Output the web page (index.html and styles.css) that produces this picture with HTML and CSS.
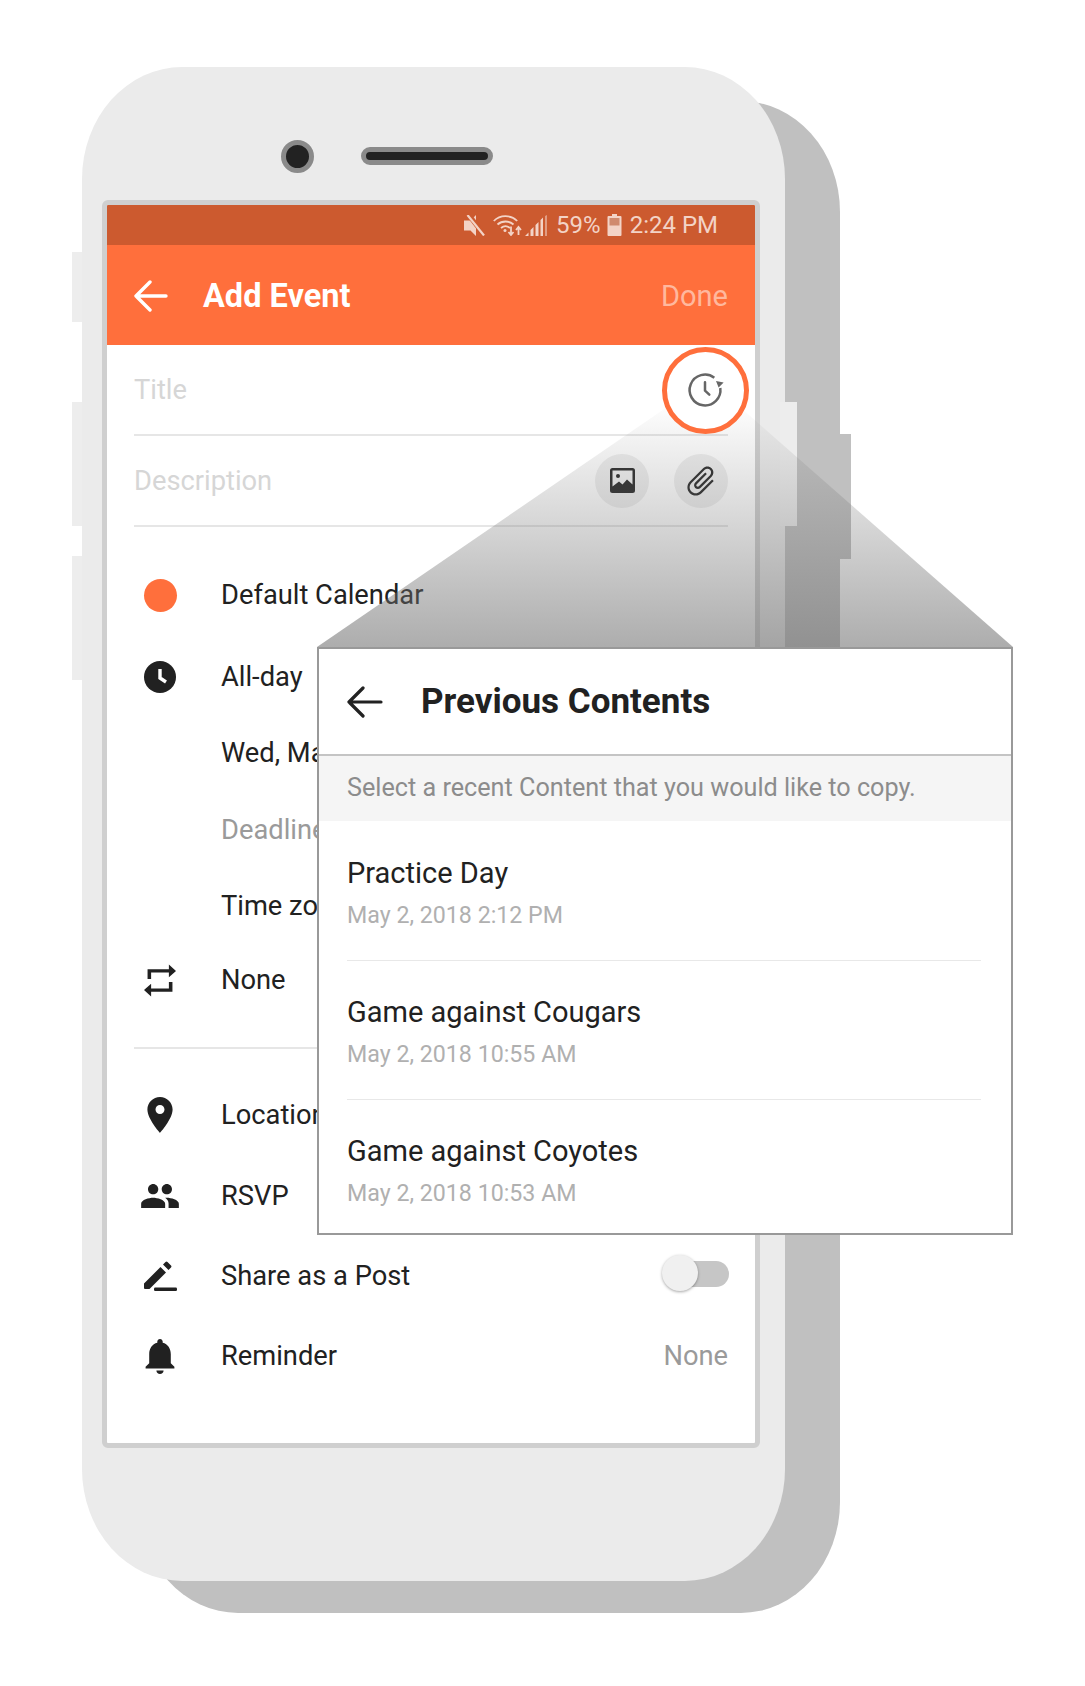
FILE: index.html
```html
<!DOCTYPE html>
<html lang="en">
  <head>
    <meta charset="UTF-8" />
    <meta name="viewport" content="width=device-width, initial-scale=1.0" />
    <title>Previous Contents</title>
    <link rel="stylesheet" href="styles.css">
  </head>
  <body>
    <div class="stage">
      <span class="side-btn side-btn-1"></span>
      <span class="side-btn side-btn-2"></span>
      <span class="side-btn side-btn-3"></span>
      <span class="side-btn side-btn-r"></span>
      <span class="shadow-btn"></span>

      <div class="phone">
        <div class="phone-top">
          <span class="camera"></span>
          <span class="speaker"></span>
        </div>
        <div class="screen">
          <div class="status-bar">
            <svg class="st-mute" viewBox="0 0 21 21"><path d="M0 5.500h6.500L12 0v21l-5.500-5.500H0z" fill="#f3d3c6"/><path d="M4-1l17 22" stroke="#cc5a2f" stroke-width="5"/><path d="M3.500 0L20 20.500" stroke="#f3d3c6" stroke-width="2.200"/></svg>
            <svg class="st-wifi" viewBox="0 0 29 21" fill="none" stroke="#f3d3c6" stroke-width="1.800"><path d="M.8 6C7-.5 18-.5 24.200 6"/><path d="M4.500 9.500c4.500-4 11.500-4 16 0"/><path d="M8 13c3-2.500 6-2.500 9 0"/><circle cx="12" cy="15.500" r="1.500" fill="#f3d3c6" stroke="none"/><path d="M18 11.500V20M15.500 17l2.500 3 2.500-3M25.500 20v-8M23 15l2.500-3 2.500 3"/></svg>
            <svg class="st-signal" viewBox="0 0 22 21" fill="#f3d3c6"><path d="M0 21l3.500-3.500V21zM5.500 21v-6l3-3v9zM10.500 21V10l3-3v14zM15.500 21V5l2.500-2.500V21z"/><path d="M20 21V1l2-1v21z" opacity=".55"/></svg>
            <span class="st-text">59%</span>
            <svg class="st-battery" viewBox="0 0 15 22"><path d="M5 0h5v2h3.500a1 1 0 011 1v18a1 1 0 01-1 1h-12a1 1 0 01-1-1V3a1 1 0 011-1H5z" fill="#f3d3c6"/><path d="M2.500 4h10v7.500h-10z" fill="#d08a6e"/></svg>
            <span class="st-text st-time">2:24 PM</span>
          </div>
          <header class="app-bar">
            <svg class="back" viewBox="0 0 34 32" fill="none" stroke="#fff" stroke-width="3.400" stroke-linecap="round" stroke-linejoin="round"><path d="M32 16H2M16 2L2 16l14 14"/></svg>
            <h1>Add Event</h1>
            <span class="done">Done</span>
          </header>

          <div class="field">
            <span class="placeholder">Title</span>
          </div>
          <div class="field">
            <span class="placeholder">Description</span>
            <span class="round-btn">
              <svg viewBox="0 0 25 25"><path d="M2.500 0h20A2.500 2.500 0 0125 2.500v20a2.500 2.500 0 01-2.500 2.500h-20A2.500 2.500 0 010 22.500v-20A2.500 2.500 0 012.500 0z" fill="#2b2b2b"/><path d="M2.500 2.500h20v14l-5.500-5-4.500 5-3.500-3-6.500 5z" fill="#f2f2f2"/><circle cx="8" cy="8" r="2" fill="#2b2b2b"/></svg>
            </span>
            <span class="round-btn">
              <svg class="clip" viewBox="0 0 24 24"><path fill="#2b2b2b" d="M16.500 6v11.500c0 2.210-1.790 4-4 4s-4-1.790-4-4V5c0-1.380 1.120-2.500 2.500-2.500s2.500 1.120 2.500 2.500v10.500c0 .55-.45 1-1 1s-1-.45-1-1V6H10v9.500c0 1.380 1.120 2.500 2.500 2.500s2.500-1.120 2.500-2.500V5c0-2.210-1.790-4-4-4S7 2.790 7 5v12.500c0 3.040 2.460 5.500 5.500 5.500s5.500-2.460 5.500-5.500V6h-1.500z"/></svg>
            </span>
          </div>

          <div class="group group-top">
            <div class="row h82">
              <span class="row-icon"><span class="dot"></span></span>
              <span>Default Calendar</span>
            </div>
            <div class="row h78 row-low">
              <span class="row-icon"><svg viewBox="0 0 32 32"><circle cx="16" cy="16" r="16"/><path d="M16 8v9l6 4" fill="none" stroke="#fff" stroke-width="3.400"/></svg></span>
              <span>All-day</span>
            </div>
            <div class="row h77"><span class="row-icon"></span><span>Wed, May 2, 2018</span></div>
            <div class="row h77"><span class="row-icon"></span><span class="muted">Deadline</span></div>
            <div class="row h75"><span class="row-icon"></span><span>Time zone</span></div>
            <div class="row h74">
              <span class="row-icon"><svg class="ic-repeat" viewBox="3 1 18 22" preserveAspectRatio="none"><path d="M7 7h10v3l4-4-4-4v3H5v6h2V7zm10 10H7v-3l-4 4 4 4v-3h12v-6h-2v4z"/></svg></span>
              <span>None</span>
            </div>
          </div>

          <div class="group">
            <div class="row h81">
              <span class="row-icon"><svg class="ic-place" viewBox="5 2 14 20"><path d="M12 2C8.130 2 5 5.130 5 9c0 5.250 7 13 7 13s7-7.750 7-13c0-3.870-3.130-7-7-7zm0 9.500c-1.380 0-2.500-1.120-2.500-2.500s1.120-2.500 2.500-2.500 2.500 1.120 2.500 2.500-1.120 2.500-2.500 2.500z"/></svg></span>
              <span>Location</span>
            </div>
            <div class="row h81">
              <span class="row-icon"><svg class="ic-group" viewBox="1 5 22 14"><path d="M16 11c1.660 0 2.990-1.340 2.990-3S17.660 5 16 5c-1.660 0-3 1.340-3 3s1.340 3 3 3zm-8 0c1.660 0 2.990-1.340 2.990-3S9.660 5 8 5C6.340 5 5 6.340 5 8s1.340 3 3 3zm0 2c-2.330 0-7 1.170-7 3.500V19h14v-2.500c0-2.330-4.670-3.500-7-3.500zm8 0c-.29 0-.62.020-.97.050 1.160.84 1.970 1.970 1.970 3.450V19h6v-2.500c0-2.330-4.670-3.500-7-3.500z"/></svg></span>
              <span>RSVP</span>
            </div>
            <div class="row">
              <span class="row-icon"><svg class="ic-pen" viewBox="0 0 34 30"><path d="M1 22.500L17.500 6l5.500 5.500L6.500 28H2a1 1 0 01-1-1zM20 3.500l2.500-2.500a1.500 1.500 0 012 0l3.500 3.500a1.500 1.500 0 010 2L25.500 9z"/><rect x="11" y="26.500" width="23" height="3.500" rx="1.200"/></svg></span>
              <span>Share as a Post</span>
              <span class="toggle"><span class="thumb"></span></span>
            </div>
            <div class="row">
              <span class="row-icon"><svg class="ic-bell" viewBox="4 2 16 20"><path d="M12 22c1.100 0 2-.9 2-2h-4c0 1.100.89 2 2 2zm6-6v-5c0-3.070-1.640-5.640-4.500-6.320V4c0-.83-.67-1.500-1.500-1.500s-1.500.67-1.500 1.500v.68C7.630 5.360 6 7.920 6 11v5l-2 2v1h16v-1l-2-2z"/></svg></span>
              <span>Reminder</span>
              <span class="row-value">None</span>
            </div>
          </div>
        </div>
      </div>

      <div class="beam"></div>
      <div class="highlight">
        <svg viewBox="0 0 36 36" fill="none" stroke="#666" stroke-width="2.500"><path d="M33.300 16A15.400 15.400 0 1 1 27.300 5.700"/><path d="M18 10.300v8.400l4.300 4" stroke-linecap="round" stroke-linejoin="round"/><path d="M29 9l7.600 1.400-5 5z" fill="#666" stroke="none"/></svg>
      </div>

      <section class="popup">
        <div class="popup-head">
          <svg class="back" viewBox="0 0 36 32" fill="none" stroke="#222" stroke-width="3.200" stroke-linecap="round" stroke-linejoin="round"><path d="M34 16H2M16 2L2 16l14 14"/></svg>
          <h2>Previous Contents</h2>
        </div>
        <p class="popup-hint">Select a recent Content that you would like to copy.</p>
        <div class="item">
          <div class="item-name">Practice Day</div>
          <div class="item-date">May 2, 2018 2:12 PM</div>
        </div>
        <div class="item">
          <div class="item-name">Game against Cougars</div>
          <div class="item-date">May 2, 2018 10:55 AM</div>
        </div>
        <div class="item">
          <div class="item-name">Game against Coyotes</div>
          <div class="item-date">May 2, 2018 10:53 AM</div>
        </div>
      </section>
    </div>
  </body>
</html>
```

FILE: styles.css
```css
* {
  box-sizing: border-box;
  margin: 0;
  padding: 0;
}

body {
  font-family: Roboto, Arial, sans-serif;
  background-color: #fff;
  color: #212121;
}

.stage {
  position: relative;
  width: 1085px;
  height: 1686px;
  padding: 67px 0 0 82px;
  overflow: hidden;
}

/* hardware buttons around the case */
.side-btn {
  position: absolute;
  left: 72px;
  width: 12px;
  background-color: #ededed;
}

.side-btn-1 {
  top: 252px;
  height: 70px;
}

.side-btn-2 {
  top: 402px;
  height: 124px;
}

.side-btn-3 {
  top: 556px;
  height: 124px;
}

.side-btn-r {
  left: 780px;
  top: 402px;
  width: 17px;
  height: 124px;
  z-index: 1;
}

.shadow-btn {
  position: absolute;
  left: 835px;
  top: 434px;
  width: 16px;
  height: 125px;
  background-color: #c0c0c0;
}

.phone {
  position: relative;
  width: 703px;
  height: 1514px;
  background-color: #ebebeb;
  border-radius: 100px / 112px;
  box-shadow: 56px 33px 0 -1px #c0c0c0;
}

.phone-top {
  display: flex;
  align-items: center;
  gap: 47px;
  height: 133px;
  padding: 45px 0 0 199px;
}

.camera {
  width: 33px;
  height: 33px;
  background-color: #222;
  border: 5px solid #8a8a8a;
  border-radius: 50%;
}

.speaker {
  width: 132px;
  height: 18px;
  background-color: #222;
  border: 5px solid #8a8a8a;
  border-radius: 9px;
}

.screen {
  position: relative;
  z-index: 2;
  width: 658px;
  height: 1248px;
  margin-left: 20px;
  background-color: #fff;
  border: 5px solid #cfcfcf;
  border-radius: 6px;
  overflow: hidden;
}

.status-bar {
  display: flex;
  align-items: center;
  justify-content: flex-end;
  height: 40px;
  padding-right: 37px;
  background-color: #cc5a2f;
  color: #f3d3c6;
}

.st-mute {
  width: 21px;
  height: 21px;
  margin-right: 8px;
}

.st-wifi {
  width: 29px;
  height: 21px;
  margin-right: 3px;
}

.st-signal {
  width: 22px;
  height: 21px;
  margin-right: 9px;
}

.st-text {
  font-size: 24px;
  line-height: 40px;
}

.st-battery {
  width: 15px;
  height: 22px;
  margin: 0 8px 0 6px;
}

.app-bar {
  display: flex;
  align-items: center;
  height: 100px;
  padding: 2px 27px 0 27px;
  background-color: #ff6f3c;
  color: #fff;
}

.app-bar .back {
  width: 34px;
  height: 32px;
  margin-right: 35px;
}

h1 {
  font-size: 32.500px;
  font-weight: 700;
}

.done {
  margin-left: auto;
  font-size: 29px;
  color: #ffb89e;
}

.field {
  display: flex;
  align-items: center;
  gap: 25px;
  height: 91px;
  margin: 0 27px;
  border-bottom: 2px solid #e6e6e6;
}

.placeholder {
  flex: 1;
  font-size: 27.300px;
  color: #d6d6d6;
}

.round-btn {
  display: flex;
  align-items: center;
  justify-content: center;
  width: 54px;
  height: 54px;
  background-color: #eee;
  border-radius: 50%;
}

.round-btn svg {
  width: 25px;
  height: 25px;
}

.round-btn .clip {
  width: 36px;
  height: 36px;
  transform: rotate(45deg);
}

.group {
  margin: 0 27px;
}

.group-top {
  padding: 27px 0 30px;
  border-bottom: 2px solid #e6e6e6;
}

.group:last-child {
  padding-top: 25px;
}

.row {
  display: flex;
  align-items: center;
  height: 80px;
  font-size: 27.300px;
}

.h82 {
  height: 82px;
}

.h81 {
  height: 81px;
}

.h78 {
  height: 78px;
}

.h77 {
  height: 77px;
}

.h75 {
  height: 75px;
}

.h74 {
  height: 74px;
}

.row-low {
  padding-top: 3px;
}

.row-icon {
  display: flex;
  flex: none;
  align-items: center;
  justify-content: center;
  width: 52px;
  margin-right: 35px;
}

.row-icon svg {
  width: 32px;
  height: 32px;
  fill: #212121;
}

.row-icon .ic-repeat {
  width: 32px;
  height: 35px;
}

.row-icon .ic-place {
  width: 26px;
  height: 36px;
}

.row-icon .ic-group {
  width: 38px;
  height: 24px;
}

.row-icon .ic-pen {
  width: 34px;
  height: 30px;
}

.row-icon .ic-bell {
  width: 32px;
  height: 36px;
}

.dot {
  width: 33px;
  height: 33px;
  background-color: #ff6f3c;
  border-radius: 50%;
}

.muted,
.row-value {
  color: #9a9a9a;
}

.row-value {
  margin-left: auto;
}

.toggle {
  position: relative;
  width: 66px;
  height: 26px;
  margin: -4px -1px 0 auto;
  background-color: #c6c6c6;
  border-radius: 13px;
}

.thumb {
  position: absolute;
  left: -1px;
  top: -6px;
  width: 36px;
  height: 36px;
  background-color: #f0f0f0;
  border-radius: 50%;
  box-shadow: 0 1px 3px rgba(0, 0, 0, 0.35);
}

/* zoom cone from the highlighted button down to the popup */
.beam {
  position: absolute;
  z-index: 3;
  left: 317px;
  top: 379px;
  width: 696px;
  height: 268px;
  background-image: linear-gradient(
    to bottom,
    rgba(109, 109, 109, 0) 8%,
    rgba(109, 109, 109, 0.56) 100%
  );
  clip-path: polygon(0 100%, 391px 0, 100% 100%);
}

.highlight {
  position: absolute;
  z-index: 4;
  left: 662px;
  top: 347px;
  display: flex;
  align-items: center;
  justify-content: center;
  width: 87px;
  height: 87px;
  background-color: #fff;
  border: 5px solid #ff6f3c;
  border-radius: 50%;
}

.highlight svg {
  width: 36px;
  height: 36px;
  margin: 0 2px 2px 0;
  overflow: visible;
}

.popup {
  position: absolute;
  z-index: 5;
  left: 317px;
  top: 647px;
  width: 696px;
  height: 588px;
  background-color: #fff;
  border: 2px solid #999;
}

.popup-head {
  display: flex;
  align-items: center;
  height: 107px;
  padding-left: 28px;
  border-bottom: 2px solid #c4c4c4;
}

.popup-head .back {
  width: 36px;
  height: 32px;
  margin-right: 38px;
}

h2 {
  font-size: 35px;
  font-weight: 700;
}

.popup-hint {
  height: 65px;
  margin-bottom: 1px;
  padding-left: 28px;
  font-size: 25.200px;
  line-height: 64px;
  color: #8c8c8c;
  background-color: #f5f5f5;
}

.item {
  height: 139px;
  margin: 0 30px 0 28px;
  padding-top: 33px;
  border-bottom: 1px solid #e8e8e8;
}

.item:last-child {
  border-bottom: none;
}

.item-name {
  font-size: 29px;
  line-height: 36px;
}

.item-date {
  margin-top: 9px;
  font-size: 23.200px;
  line-height: 30px;
  color: #b0b0b0;
}
```
